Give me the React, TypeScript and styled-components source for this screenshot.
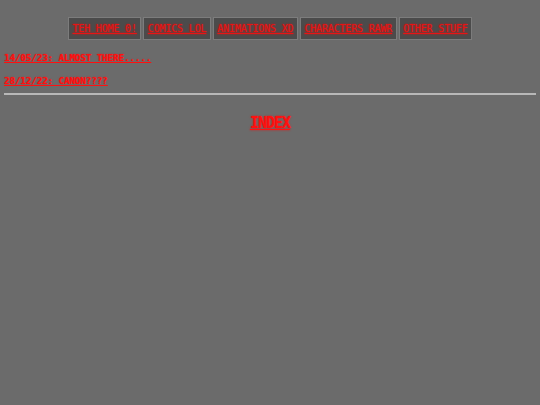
import React from "react";
import styled, { createGlobalStyle } from "styled-components";

const GlobalStyle = createGlobalStyle`
    html, body {
        margin: 0;
        padding: 0;
        background: #6b6b6b;
    }
    body {
        font-family: "DejaVu Sans Mono", "Liberation Mono", monospace;
    }
`

const Page = styled.div`
    padding: 0 4px;
    min-height: 405px;
    box-sizing: border-box;
`

const NavBar = styled.nav`
    display: flex;
    justify-content: center;
    gap: 2px;
    padding-top: 17px;
`

const NavItem = styled.a`
    display: block;
    background: #4b4b4b;
    border: 1px solid #7c7c7c;
    padding: 5px 3.5px;
    font-size: 10px;
    letter-spacing: -0.17px;
    line-height: 11px;
    color: #e81414;
    text-decoration: underline;
    text-shadow: 0 0 2px rgba(255, 0, 0, 0.8);
    white-space: nowrap;
`

const News = styled.div`
    display: flex;
    flex-direction: column;
    gap: 11px;
    margin-top: 12px;
`

const NewsLink = styled.a`
    display: block;
    font-size: 9.5px;
    letter-spacing: -0.27px;
    font-weight: bold;
    line-height: 12px;
    color: #ff1010;
    text-decoration: underline;
    text-shadow: 0 0 1.5px rgba(255, 0, 0, 0.7);
`

const Rule = styled.hr`
    margin: 6px 0 0;
    border: none;
    height: 2px;
    background: #b8b8b8;
`

const Title = styled.h1`
    margin: 20px 0 0;
    text-align: center;
    font-size: 15px;
    letter-spacing: -1px;
    line-height: 17px;
    font-weight: bold;

    a {
        color: #ff1010;
        text-decoration: underline;
        text-shadow: 0 0 2px rgba(255, 0, 0, 0.8);
    }
`

const links = ["TEH HOME 0!", "COMICS LOL", "ANIMATIONS XD", "CHARACTERS RAWR", "OTHER STUFF"];
const updates = ["14/05/23: ALMOST THERE.....", "28/12/22: CANON????"];

export default function App() {
    return <Page>
        <GlobalStyle />
        <NavBar>
            {links.map(l => <NavItem key={l} href="#">{l}</NavItem>)}
        </NavBar>
        <News>
            {updates.map(u => <NewsLink key={u} href="#">{u}</NewsLink>)}
        </News>
        <Rule />
        <Title><a href="#">INDEX</a></Title>
    </Page>
}
